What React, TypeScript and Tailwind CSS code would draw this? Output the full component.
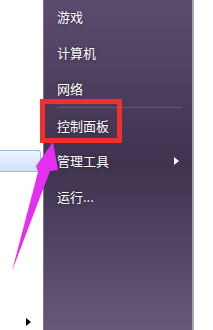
import React from 'react';

const ITEMS = ['游戏', '计算机', '网络', '控制面板', '管理工具', '运行...'];

export default function App() {
  return (
    <div
      className="relative flex h-[330px] w-[213px] overflow-hidden bg-white"
      style={{ fontFamily: '"Noto Sans CJK SC", "Noto Sans", sans-serif' }}
    >
      {/* Left strip: highlighted program row + expand arrow */}
      <div className="flex w-[43px] shrink-0 flex-col">
        <div className="mt-[150px] h-[22px] w-[41px] rounded-r-[3px] border border-l-0 border-[#9dbce4] bg-linear-to-b from-[#eef5fe] to-[#cfe2fa]" />
        <div className="mt-auto mb-[4px] ml-[26px] h-0 w-0 border-y-[4px] border-l-[5px] border-y-transparent border-l-black" />
      </div>

      {/* Start menu right pane */}
      <div className="flex w-[151px] shrink-0 flex-col border-r-2 border-l border-r-[#aaa4b4] border-l-[#7b7388] bg-linear-to-b from-[#5c4c6e] via-[#3f3350] to-[#665879] pl-[13px] pr-[10px]">
        <ul className="-mt-px">
          {ITEMS.map((item, i) => (
            <li
              key={item}
              className={`flex h-9 items-center justify-between text-[13px] text-white [text-shadow:0_0_3px_rgba(0,0,0,0.5)] ${
                i === 3 ? 'border-t border-white/15' : ''
              }`}
            >
              <span>{item}</span>
              {i === 4 && (
                <span className="mr-[3px] h-0 w-0 border-y-[4px] border-l-[5px] border-y-transparent border-l-white" />
              )}
            </li>
          ))}
        </ul>
      </div>

      <div className="flex-1 bg-white" />

      {/* Annotation: red box */}
      <div className="absolute left-[40px] top-[99px] h-[44px] w-[82px] border-[5px] border-[#f0302e]" />

      {/* Annotation: magenta arrow */}
      <svg className="absolute left-0 top-0" width="213" height="330" viewBox="0 0 213 330">
        <polygon
          points="53,142 58,170 50,171 12,271 38,172 36,166"
          fill="#e52ff0"
        />
      </svg>
    </div>
  );
}
